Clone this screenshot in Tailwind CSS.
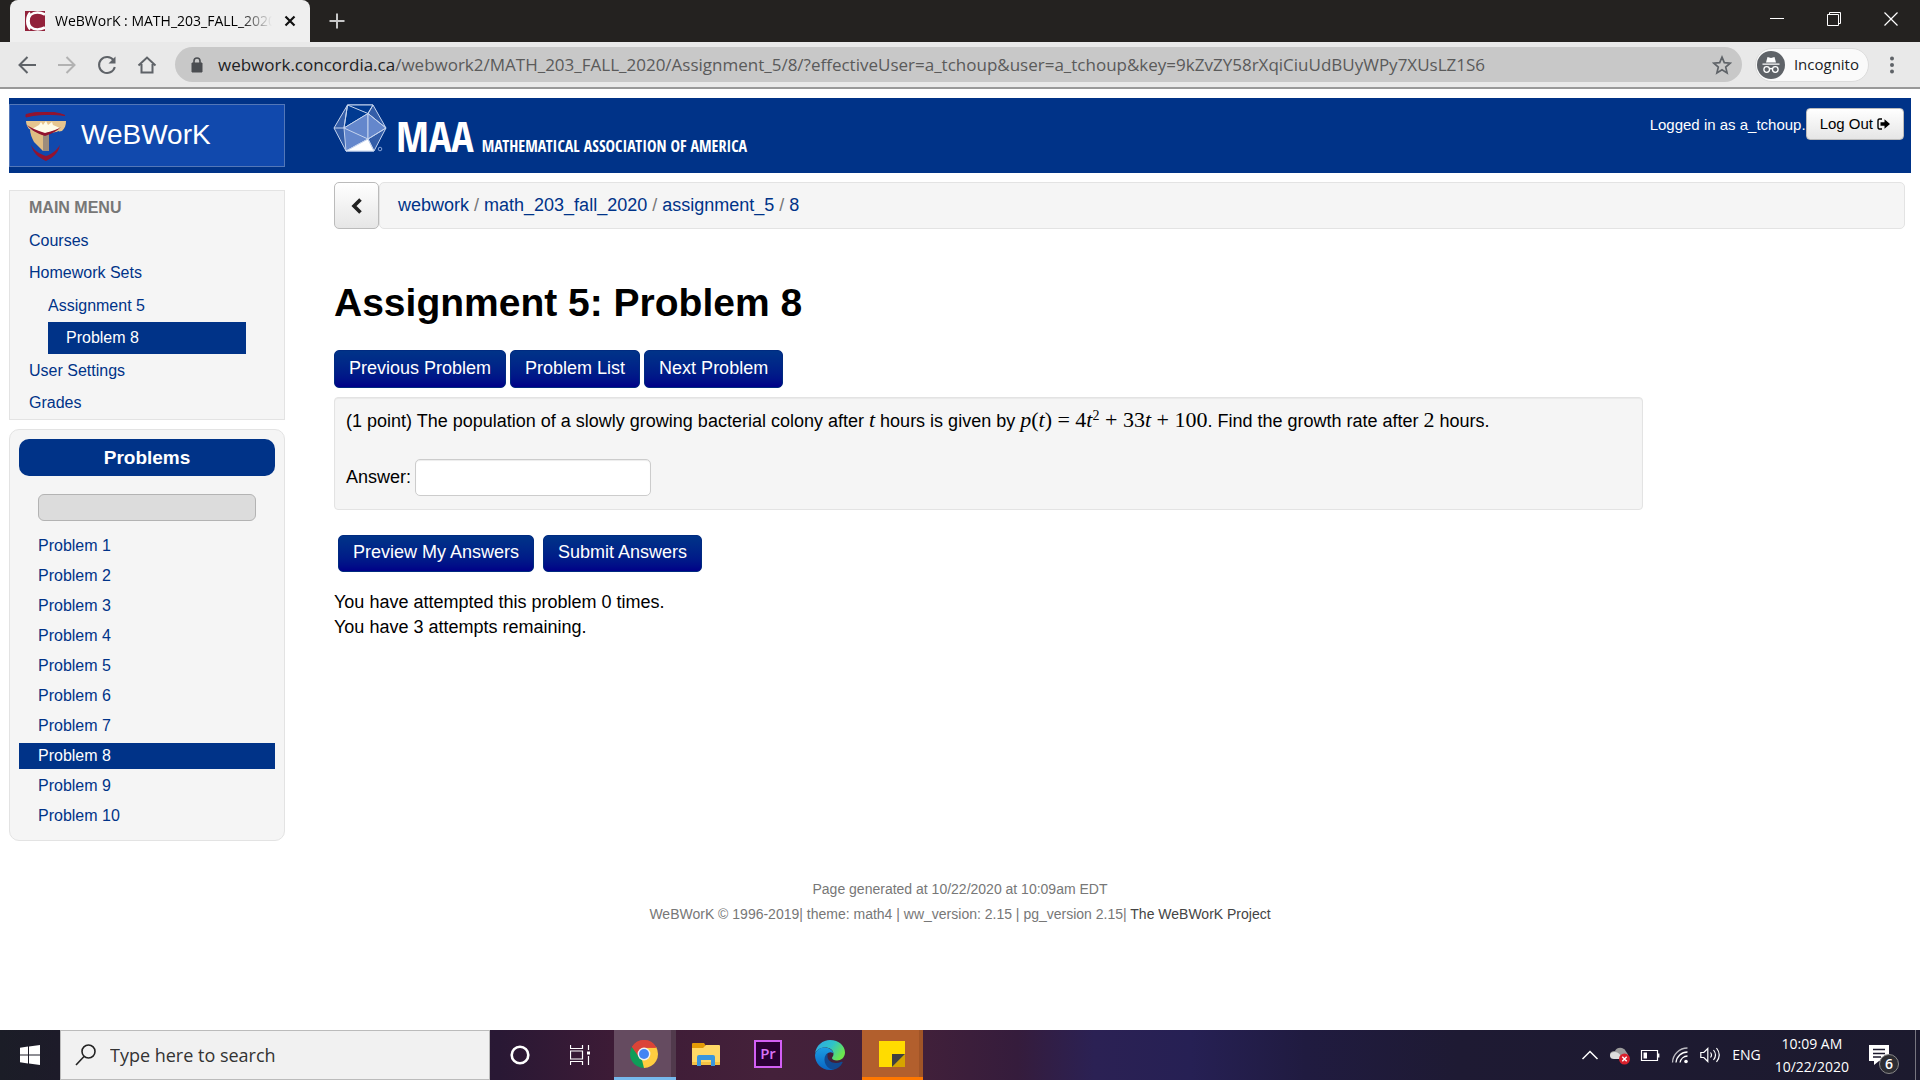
<!DOCTYPE html>
<html lang="en">
<head>
  <meta charset="utf-8" />
  <meta name="viewport" content="width=device-width, initial-scale=1" />
  <title>WeBWorK : MATH_203_FALL_2020</title>
  <script src="https://cdn.jsdelivr.net/npm/@tailwindcss/browser@4"></script>
</head>

<body class="h-screen flex flex-col overflow-hidden bg-white text-black font-['Liberation_Sans',Arial,sans-serif]">

  <!-- Tab strip -->
  <div class="h-[42px] shrink-0 flex bg-[#242220] font-['Open_Sans',sans-serif]">
    <div class="ml-[10px] w-[300px] flex items-center gap-[10px] rounded-t-lg bg-[#efefef] pl-[15px] pr-3">
      <svg class="w-5 h-5 shrink-0" viewBox="0 0 20 20">
        <rect width="20" height="20" fill="#92213a"/>
        <path d="M20 3.500C17 1.800 14.500 1.500 12.500 1.500 7 1.500 3.500 5 3.500 10s3.500 8.500 9 8.500c2 0 4.500-.3 7.500-2" fill="none" stroke="#fff" stroke-width="2.600"/>
        <path d="M5 1.500Q2 5 2 10t3 8.500" fill="none" stroke="#fff" stroke-width="2"/>
      </svg>
      <span class="flex-1 overflow-hidden whitespace-nowrap text-sm bg-gradient-to-r from-black from-85% to-transparent bg-clip-text text-transparent">WeBWorK : MATH_203_FALL_2020</span>
      <button aria-label="Close tab">
        <svg class="w-4 h-4" viewBox="0 0 16 16" stroke="#111" stroke-width="2.200"><path d="M3.500 3.500l9 9M12.500 3.500l-9 9"/></svg>
      </button>
    </div>
    <button class="ml-[18px]" aria-label="New tab">
      <svg class="w-[18px] h-[18px]" viewBox="0 0 18 18" stroke="#c8c8c8" stroke-width="2"><path d="M9 1.500v15M1.500 9h15"/></svg>
    </button>
    <div class="ml-auto mb-1 flex items-center gap-[43px] pr-[22px]">
      <button aria-label="Minimize"><svg class="w-[14px] h-[14px]" viewBox="0 0 14 14" stroke="#fff"><path d="M0 6.500h14"/></svg></button>
      <button aria-label="Restore"><svg class="w-[14px] h-[14px]" viewBox="0 0 14 14" fill="none" stroke="#fff"><path d="M.5 2.500h11v11H.5zM2.500 2.500v-2h11v11h-2"/></svg></button>
      <button aria-label="Close"><svg class="w-[14px] h-[14px]" viewBox="0 0 14 14" stroke="#fff" stroke-width="1.200"><path d="M.5.5l13 13M13.500.5l-13 13"/></svg></button>
    </div>
  </div>

  <!-- Toolbar -->
  <div class="h-[47px] shrink-0 flex items-center bg-[#e9e9e9] border-b-2 border-[#999] pl-[17px] pr-[22px] font-['Open_Sans',sans-serif]">
    <div class="flex gap-5 mr-[18px] text-[#5f6368]">
      <button aria-label="Back"><svg class="w-5 h-5" viewBox="0 0 20 20" fill="none" stroke="currentColor" stroke-width="2"><path d="M19 10H3M10.500 2L2.500 10l8 8"/></svg></button>
      <button aria-label="Forward" class="text-[#b2b2b2]"><svg class="w-5 h-5" viewBox="0 0 20 20" fill="none" stroke="currentColor" stroke-width="2"><path d="M1 10h16M9.500 2l8 8-8 8"/></svg></button>
      <button aria-label="Reload"><svg class="w-5 h-5" viewBox="0 0 20 20" fill="none" stroke="currentColor" stroke-width="2"><path d="M16.500 5.200A8 8 0 1 0 17.800 12"/><path d="M18.500 1.500v7h-7z" fill="currentColor" stroke="none"/></svg></button>
      <button aria-label="Home"><svg class="w-5 h-5" viewBox="0 0 20 20" fill="none" stroke="currentColor" stroke-width="2"><path d="M1.500 10.500L10 2.500l8.500 8M4.500 9v8.500h11V9"/></svg></button>
    </div>
    <div class="flex-1 h-[35px] rounded-full bg-[#c8c8c8] flex items-center pl-4 pr-[10px]">
      <svg class="w-3 h-4 mr-[15px]" viewBox="0 0 12 16"><path d="M1 6h10v9H1z" fill="#4a4d51" stroke="#4a4d51" stroke-linejoin="round"/><path d="M3 6V4a3 3 0 0 1 6 0v2" fill="none" stroke="#4a4d51" stroke-width="1.600"/></svg>
      <p class="flex-1 whitespace-nowrap text-[17px] text-[#5a5a5a]"><span class="text-[#202124]">webwork.concordia.ca</span>/webwork2/MATH_203_FALL_2020/Assignment_5/8/?effectiveUser=a_tchoup&amp;user=a_tchoup&amp;key=9kZvZY58rXqiCiuUdBUyWPy7XUsLZ1S6</p>
      <button aria-label="Bookmark"><svg class="w-5 h-5" viewBox="0 0 20 20" fill="none" stroke="#5f6368" stroke-width="1.700"><path d="M10 2.200l2.300 5.500 5.900.5-4.500 3.900 1.400 5.800L10 14.800l-5.100 3.100 1.400-5.800-4.500-3.900 5.900-.5z"/></svg></button>
    </div>
    <button class="ml-[13px] mr-[17px] h-[34px] rounded-full border border-[#dcdcdc] bg-[#fafafa] flex items-center gap-[9px] pl-px pr-[9px] text-[15px] text-[#202124]">
      <svg class="w-7 h-7" viewBox="0 0 28 28">
        <circle cx="14" cy="14" r="14" fill="#5f6368"/>
        <path d="M9 11.500l1.500-5.500 3.500 1 3.500-1 1.500 5.500zM5.500 12.500h17v1.200h-17z" fill="#fff"/>
        <g fill="none" stroke="#fff" stroke-width="1.300"><circle cx="9.700" cy="18.500" r="2.800"/><circle cx="18.300" cy="18.500" r="2.800"/><path d="M12.500 18q1.500-1 3 0"/></g>
      </svg>
      Incognito
    </button>
    <button aria-label="Menu"><svg class="w-3 h-[18px]" viewBox="0 0 12 18" fill="#5f6368"><circle cx="6" cy="2.500" r="2"/><circle cx="6" cy="9" r="2"/><circle cx="6" cy="15.500" r="2"/></svg></button>
  </div>

  <!-- Page -->
  <div class="flex-1 min-h-0 px-[9px] pt-[9px]">
    <header class="h-[75px] bg-[#003388] flex text-white">
      <a href="#" class="my-[6px] w-[276px] border border-[#5377b8] bg-[#1149ad] flex items-center pl-[15px] pb-[2px] text-[28px]">
        <svg class="w-[42px] h-[50px] mt-1 mr-[14px]" viewBox="0 0 42 50">
          <path d="M1 2.500C14-1 30-1 40 3.500 28 1.800 12 2 1 5z" fill="#93132f" stroke="#93132f"/>
          <path d="M1 9h40c0 4-1 7-4 10L20 22 4 17C2 14 1 12 1 9z" fill="#e6c58f"/>
          <path d="M7 17l7-4 2-3 2 3 3-4 2 4 4-3 1 3 7 3-14 6z" fill="#fffbe8"/>
          <path d="M5 17l13 6v16l-9-9C7 26 5 22 5 17z" fill="#dfbd83"/>
          <path d="M18 22l6-2v19h-6z" fill="#9c8c7c"/>
          <path d="M24 23l10-4c-1 7-5 11-10 15z" fill="#1149ad"/>
          <path d="M2 13q5 4 18 8 12-3 16-6-6 6-16 9Q7 20 2 13z" fill="#93132f"/>
          <path d="M6 33c3 6 9 9 15 11 6-2 11-6 14-11-2 9-8 13-14 16C14 46 8 41 6 33z" fill="#93132f"/>
        </svg>
        WeBWorK
      </a>
      <a href="#" class="ml-12 mt-[6px] flex h-12 font-['Open_Sans_Condensed','Roboto_Condensed','Noto_Sans_Condensed','Liberation_Sans',sans-serif] font-bold">
        <svg class="w-14 h-12 mr-[7px]" viewBox="0 0 56 48" fill="none" stroke="#c5d4ee">
          <path d="M14.500 1H40l13 23-12 23H13L1 24z" fill="#335da8"/>
          <path d="M14.500 1L40 1 35 9.500 11 24z" fill="#003a91"/>
          <path d="M11 24L35 9.500V35L13 47z" fill="#6487cc"/>
          <path d="M35 9.500L53 24 35 35z" fill="#6487cc"/>
          <path d="M35 35L13 47h28z" fill="#fff"/>
          <path d="M14.500 1L11 24M14.500 1L35 9.500 40 1M1 24h10L35 35l18-11M35 9.500L53 24M35 35l6 12" />
          <circle cx="47" cy="45" r="1.800" stroke="#88a4d8"/>
        </svg>
        <span class="self-end text-[42px] leading-[32px]">MAA</span>
        <span class="self-end ml-2 text-[16px] leading-[12px]">MATHEMATICAL ASSOCIATION OF AMERICA</span>
      </a>
      <div class="ml-auto mr-[7px] mt-[10px] flex items-start text-[15px]">
        <span class="leading-[34px]">Logged in as a_tchoup.</span>
        <a href="#" class="h-8 px-[13px] rounded border border-[#bbb] bg-gradient-to-b from-white to-[#e6e6e6] text-black flex items-center gap-1">Log Out
          <svg class="w-[13px] h-3" viewBox="0 0 13 12"><path d="M5 1H2.500Q1 1 1 3v6q0 2 1.500 2H5" fill="none" stroke="#000" stroke-width="1.400"/><path d="M3.500 4.200h4V1.200L13 6l-5.500 4.800v-3h-4z"/></svg>
        </a>
      </div>
    </header>

    <div class="flex gap-[49px]">
      <aside class="w-[276px] shrink-0 pt-[17px] flex flex-col gap-[9px] text-[#003388]">
        <nav class="border border-[#e3e3e3] bg-[#f5f5f5] px-[19px] leading-8">
          <h2 class="font-bold leading-[34px] text-[#777]">MAIN MENU</h2>
          <ul>
            <li><a href="#">Courses</a></li>
            <li><a href="#">Homework Sets</a>
              <ul class="py-px px-[19px]">
                <li><a href="#">Assignment 5</a></li>
                <li><a href="#" class="block bg-[#003388] text-white pl-[18px]">Problem 8</a></li>
              </ul>
            </li>
            <li><a href="#">User Settings</a></li>
            <li><a href="#">Grades</a></li>
          </ul>
        </nav>

        <nav class="border border-[#e3e3e3] rounded-[10px] bg-[#f5f5f5] px-[9px] pt-[9px] pb-[11px]">
          <h2 class="h-[37px] rounded-[10px] bg-[#003388] text-white text-center text-[19px] leading-[37px] font-bold">Problems</h2>
          <div class="mx-[19px] mt-[18px] mb-3 h-[27px] rounded-md border border-[#b3b3b3] bg-[#dcdcdc]"></div>
          <ul class="grid gap-1 leading-[26px]">
            <li><a href="#" class="block pl-[19px]">Problem 1</a></li>
            <li><a href="#" class="block pl-[19px]">Problem 2</a></li>
            <li><a href="#" class="block pl-[19px]">Problem 3</a></li>
            <li><a href="#" class="block pl-[19px]">Problem 4</a></li>
            <li><a href="#" class="block pl-[19px]">Problem 5</a></li>
            <li><a href="#" class="block pl-[19px]">Problem 6</a></li>
            <li><a href="#" class="block pl-[19px]">Problem 7</a></li>
            <li><a href="#" class="block pl-[19px] bg-[#003388] text-white">Problem 8</a></li>
            <li><a href="#" class="block pl-[19px]">Problem 9</a></li>
            <li><a href="#" class="block pl-[19px]">Problem 10</a></li>
          </ul>
        </nav>
      </aside>

      <main class="flex-1 pt-[9px] pr-[6px] text-lg leading-[25px]">
        <div class="flex h-[47px]">
          <a href="#" aria-label="Up" class="w-[45px] rounded-[5px] border border-[#bbb] bg-gradient-to-b from-white to-[#e6e6e6] flex items-center justify-center">
            <svg class="w-3 h-4 mr-[2px]" viewBox="0 0 12 16" fill="none" stroke="#222" stroke-width="3.600"><path d="M10.500 1.500L4 8l6.500 6.500"/></svg>
          </a>
          <nav class="flex-1 rounded-[5px] border border-[#e3e3e3] bg-[#f5f5f5] flex items-center gap-[5px] pl-[18px] text-[#003388]">
            <a href="#">webwork</a><span class="text-[#777]">/</span>
            <a href="#">math_203_fall_2020</a><span class="text-[#777]">/</span>
            <a href="#">assignment_5</a><span class="text-[#777]">/</span>
            <a href="#">8</a>
          </nav>
        </div>

        <h1 class="mt-[49px] text-[39px] leading-[50px] font-bold">Assignment 5: Problem 8</h1>

        <div class="mt-[22px] flex gap-1 text-white">
          <a href="#" class="h-[38px] px-[14px] rounded-[5px] border border-[#002a80] bg-gradient-to-b from-[#003388] to-[#000088] leading-[35px]">Previous Problem</a>
          <a href="#" class="h-[38px] px-[14px] rounded-[5px] border border-[#002a80] bg-gradient-to-b from-[#003388] to-[#000088] leading-[35px]">Problem List</a>
          <a href="#" class="h-[38px] px-[14px] rounded-[5px] border border-[#002a80] bg-gradient-to-b from-[#003388] to-[#000088] leading-[35px]">Next Problem</a>
        </div>

        <form>
          <div class="mt-[9px] w-5/6 rounded border border-[#e3e3e3] bg-[#f5f5f5] shadow-[inset_0_1px_1px_rgba(0,0,0,0.05)] px-[11px] pt-[11px] pb-[13px]">
            <p class="h-[25px] whitespace-nowrap">(1 point) The population of a slowly growing bacterial colony after <i class="font-['Liberation_Serif',serif] text-[22px] leading-none">t</i> hours is given by <span class="font-['Liberation_Serif',serif] text-[22px] leading-none"><i>p</i>(<i>t</i>) = 4<i>t</i><sup class="text-sm leading-none">2</sup> + 33<i>t</i> + 100</span>. Find the growth rate after <span class="font-['Liberation_Serif',serif] text-[22px] leading-none">2</span> hours.</p>
            <div class="mt-[25px] flex items-center gap-1">
              <label for="answer">Answer:</label>
              <input id="answer" type="text" class="w-[236px] h-[37px] px-2 rounded-[5px] border border-[#ccc] bg-white shadow-[inset_0_1px_1px_rgba(0,0,0,0.075)]">
            </div>
          </div>
          <div class="mt-[25px] ml-1 flex gap-[9px] text-white">
            <button type="button" class="h-[37px] px-[14px] rounded-[5px] border border-[#002a80] bg-gradient-to-b from-[#003388] to-[#000088] leading-[33px] pb-[2px]">Preview My Answers</button>
            <button type="button" class="h-[37px] px-[14px] rounded-[5px] border border-[#002a80] bg-gradient-to-b from-[#003388] to-[#000088] leading-[33px] pb-[2px]">Submit Answers</button>
          </div>
        </form>
        <p class="mt-[18px]">You have attempted this problem 0 times.<br>You have 3 attempts remaining.</p>
      </main>
    </div>

    <footer class="mt-9 text-center text-sm leading-[25px] text-[#777]">
      <p>Page generated at 10/22/2020 at 10:09am EDT</p>
      <p>WeBWorK © 1996-2019| theme: math4 | ww_version: 2.15 | pg_version 2.15| <a href="#" class="text-[#444]">The WeBWorK Project</a></p>
    </footer>
  </div>

  <!-- Taskbar -->
  <div class="h-[50px] shrink-0 flex bg-[linear-gradient(to_right,#1b1d27_0%,#1d1b29_3%,#291834_26%,#3d1b36_32%,#44213a_40%,#41203a_48%,#351c3c_53%,#2b2154_57%,#262054_62%,#201b40_68%,#1e1a33_76%,#1c1a2e_100%)] text-white font-['Open_Sans',sans-serif]">
    <button class="w-[60px] flex items-center justify-center" aria-label="Start">
      <svg class="w-5 h-5" viewBox="0 0 20 20" fill="#fff"><path d="M0 2.800l8-1.200v7.900H0zM9 1.400L20 0v9.500H9zM0 10.500h8v7.900l-8-1.200zM9 10.500h11V20L9 18.600z"/></svg>
    </button>
    <label class="w-[430px] flex items-center bg-[#f1f1f1] border border-[#bbb] pl-[14px]">
      <svg class="w-[22px] h-[22px] mr-[13px]" viewBox="0 0 22 22" fill="none" stroke="#222" stroke-width="1.600"><circle cx="13.500" cy="7.500" r="6.500"/><path d="M9 12.500L1 21"/></svg>
      <input type="text" aria-label="Search" placeholder="Type here to search" class="flex-1 bg-transparent text-lg placeholder:text-[#333]">
    </label>
    <button class="w-[62px] pr-[2px] flex items-center justify-center" aria-label="Cortana">
      <svg class="w-5 h-5" viewBox="0 0 20 20" fill="none" stroke="#fff" stroke-width="2.600"><circle cx="10" cy="10" r="8.300"/></svg>
    </button>
    <button class="w-[62px] pr-[6px] flex items-center justify-center" aria-label="Task View">
      <svg class="w-5 h-5" viewBox="0 0 20 20" fill="none" stroke="#fff" stroke-width="1.200"><path d="M.5 0v3.500h12V0M.5 20v-3.500h12V20M.5 6h12v8H.5zM18.500 0v5M18.500 11v9"/><path d="M17 6.500h3v3h-3z" fill="#fff" stroke="none"/></svg>
    </button>
    <button class="w-[62px] pr-[2px] flex items-center justify-center bg-[#654b60] border-b-[3px] border-[#76b9ed] shadow-[inset_-5px_0_0_#513a4c]" aria-label="Chrome">
      <svg class="w-7 h-7" viewBox="0 0 28 28">
        <path d="M14 14L1.880 7A14 14 0 0 1 26.120 7z" fill="#db4437"/>
        <path d="M14 14L26.120 7A14 14 0 0 1 14 28z" fill="#ffcd40"/>
        <path d="M14 14v14A14 14 0 0 1 1.880 7z" fill="#0f9d58"/>
        <path d="M14 7.700h12.500L19.400 17z" fill="#ffcd40"/>
        <path d="M19.400 17.200L14 28l-2-8z" fill="#ffcd40"/>
        <path d="M8.500 17L1.880 7 9 9.500z" fill="#0f9d58"/>
        <path d="M14 7.700h12.500A14 14 0 0 0 1.880 7l6.600 9.500z" fill="#db4437"/>
        <circle cx="14" cy="14" r="6.400" fill="#f1f1f1"/><circle cx="14" cy="14" r="5" fill="#4285f4"/>
      </svg>
    </button>
    <button class="w-[62px] pr-[2px] flex items-center justify-center" aria-label="File Explorer">
      <svg class="w-7 h-6" viewBox="0 0 28 24">
        <path d="M0 1q0-1 1-1h11l2 3-2 3H0z" fill="#e39a06"/>
        <path d="M0 5h11l3-3h13q1 0 1 1v18q0 1-1 1H1q-1 0-1-1z" fill="#ffd866"/>
        <path d="M0 19h28v2q0 1-1 1H1q-1 0-1-1z" fill="#f4c244"/>
        <path d="M5 23V14q0-2 2-2h14q2 0 2 2v9h-4v-6H9v6z" fill="#3a96dd"/>
      </svg>
    </button>
    <button class="w-[62px] pr-[2px] flex items-center justify-center" aria-label="Premiere Pro">
      <span class="w-7 h-7 mb-[2px] border-2 border-[#d35ff5] bg-[#2a0034] text-[#d873f5] text-[15px] leading-[23px] font-semibold">Pr</span>
    </button>
    <button class="w-[62px] pr-[2px] flex items-center justify-center" aria-label="Edge">
      <svg class="w-[30px] h-[30px]" viewBox="0 0 30 30">
        <defs>
          <linearGradient id="wave" x1="0" y1="0" x2="1" y2=".5"><stop offset="0" stop-color="#2fa4e8"/><stop offset=".55" stop-color="#2fc3c9"/><stop offset="1" stop-color="#6be54e"/></linearGradient>
          <linearGradient id="body" x1="0" y1="0" x2="0" y2="1"><stop offset="0" stop-color="#1b9de2"/><stop offset="1" stop-color="#0a66c4"/></linearGradient>
        </defs>
        <path d="M0 14C1 5 8 0 15 0c9 0 15 6 15 12.500 0 5-4 8-8 8-3 0-5-1-5-2.500 0-1 1.500-1.500 1.500-4C18.500 10 15 7.500 10 7.500 5 7.500 1.500 10 0 14z" fill="url(#wave)"/>
        <path d="M0 15C1 10 5 7.500 9.500 7.500c5 0 9 3 9 6.500 0-2-6-3-7.500 2C9 23 14 28 20 28.500 18.500 29.500 17 30 15 30 6 30 0 23 0 15z" fill="url(#body)"/>
        <path d="M12.500 13C7 17 9 28 18 29.700c4-.7 7.500-3 9.500-7 .5-1-.5-1.200-1-1-7 3-14 0-14-5.500 0-1 0-2 0-3.200z" fill="#114a92"/>
      </svg>
    </button>
    <button class="w-[61px] pr-[2px] flex items-center justify-center bg-[#b25f2d] border-b-[3px] border-[#ff7800] shadow-[inset_-4px_0_0_#a05427]" aria-label="Sticky Notes">
      <svg class="w-[26px] h-[26px]" viewBox="0 0 26 26"><path d="M0 0h26v26H0z" fill="#ffdc00"/><path d="M26 13v13H13z" fill="#d6a400"/><path d="M13 13h13L13 26z" fill="#404040"/></svg>
    </button>

    <!-- System tray -->
    <div class="ml-auto flex items-center gap-[10px]">
      <svg class="w-5 h-5" viewBox="0 0 20 20" fill="none" stroke="#fff" stroke-width="1.500"><path d="M2.500 14L10 6.500l7.500 7.500"/></svg>
      <svg class="w-5 h-5" viewBox="0 0 20 20"><path d="M5 13Q0 13 0 9.500T5 6q2-4 7-3 3 .5 4 3.500l2 3v4z" fill="#9b9b9b"/><path d="M4 14Q0 14 0 10.500T5 7q5 0 7 7z" fill="#ddd"/><circle cx="14.500" cy="14" r="5.500" fill="#d8202c"/><path d="M12.300 11.800l4.400 4.400M16.700 11.800l-4.400 4.400" stroke="#fff" stroke-width="1.400"/></svg>
      <svg class="w-5 h-5" viewBox="0 0 20 20" fill="none" stroke="#fff" stroke-width="1.200"><path d="M1.500 5.500h16v10h-16z"/><path d="M18.500 8.500v4" stroke-width="1.800"/><path d="M3.500 7.500h3.500v6h-3.500z" fill="#fff" stroke="none"/></svg>
      <svg class="w-5 h-5" viewBox="0 0 20 20" fill="none" stroke="#fff" stroke-width="1.300"><path d="M2.500 17.500A15 15 0 0 1 17.500 3" opacity=".7"/><path d="M6 17.500A11.500 11.500 0 0 1 17.500 7M10 17.500A8 8 0 0 1 17.500 11"/><circle cx="16" cy="16.500" r="1.800" fill="#fff" stroke="none"/></svg>
      <svg class="w-5 h-5" viewBox="0 0 20 20" fill="none" stroke="#fff" stroke-width="1.200"><path d="M.8 7.500h3l4-4v13l-4-4h-3z"/><path d="M10.500 7.500q2 2.500 0 5M13.500 5q4 5 0 10M16.500 3q5.500 7 0 14"/></svg>
      <span class="ml-[2px] text-sm">ENG</span>
      <p class="ml-1 text-sm leading-[23px] text-center">10:09 AM<br>10/22/2020</p>
      <button class="relative ml-[10px] mr-4" aria-label="Notifications">
        <svg class="w-5 h-5" viewBox="0 0 20 20"><path d="M0 0h20v16H10l-5 4v-4H0z" fill="#fff"/><path d="M4 4.500h12M4 8.500h12M4 12h8" stroke="#1c1a2e" stroke-width="1.300"/></svg>
        <span class="absolute left-[10px] top-[9px] w-5 h-5 rounded-full border border-[#888] bg-[#2d2d33] text-sm leading-[18px] font-semibold">6</span>
      </button>
      <span class="self-stretch w-[5px] border-l border-[#77757f]"></span>
    </div>
  </div>
</body>
</html>
